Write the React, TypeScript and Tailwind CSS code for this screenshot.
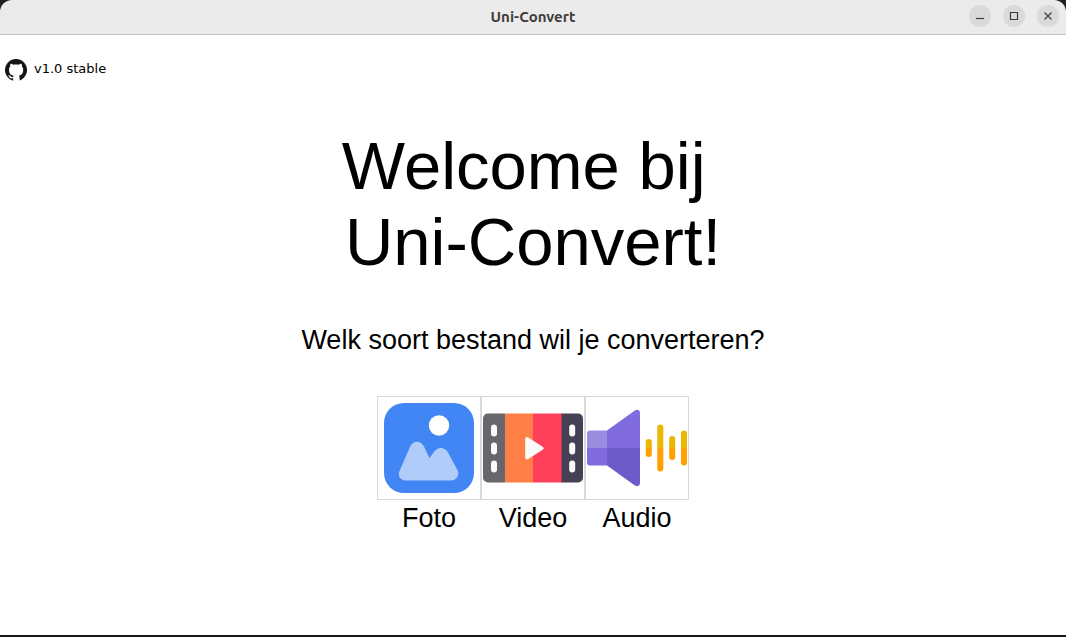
import React from 'react';

function GitHubMark() {
  return (
    <svg viewBox="0 0 22 22" className="size-[22px] shrink-0" aria-hidden="true">
      <circle cx="11" cy="11" r="11" fill="#161418" />
      <path
        d="M5.600 4.800c1 0 1.900.3 2.600.9 1.800-.4 3.800-.4 5.600 0 .7-.6 1.600-.9 2.600-.9.500.9.700 1.700.5 2.500.9 1 1.300 2.200 1.300 3.700 0 3.600-1.700 5.200-4.300 5.700.5.600.7 1.400.7 2.400V22.500H8.200v-3.200c-2.500.4-3.400-.4-4-1.500-.3-.6-.7-1-1.200-1.500.9-.4 1.800 0 2.400.8.700 1 1.500 1.300 2.800 1 .1-.5.200-1 .5-1.400-2.700-.5-4.700-2-4.700-5.700 0-1.500.4-2.700 1.300-3.700-.2-.8-.1-1.600.3-2.500z"
        fill="#fff"
      />
    </svg>
  );
}

function PhotoIcon() {
  return (
    <svg viewBox="0 0 100 100" className="size-full" aria-hidden="true">
      <rect x="5" y="5" width="90" height="90" rx="20" fill="#4286f5" />
      <circle cx="60" cy="27.500" r="10.200" fill="#fff" />
      <path d="M20.500 73 L31.200 48.500 C34 42.200 42 42.200 45 48.500 L50.500 60 L55.500 53.300 C59.500 48.200 66 49 69 54.500 L78.500 72 C81 77 77.500 82.500 72 82.500 H27 C21.500 82.500 18.300 78 20.500 73Z" fill="#b0ccfb" />
    </svg>
  );
}

function VideoIcon() {
  return (
    <svg viewBox="0 0 100 100" className="size-full" aria-hidden="true">
      <path d="M22 15.500H5a5 5 0 0 0-5 5v59a5 5 0 0 0 5 5h17z" fill="#66666b" />
      <path d="M78 15.500h17a5 5 0 0 1 5 5v59a5 5 0 0 1-5 5H78z" fill="#464055" />
      <path d="M22 15.500h28v69H22z" fill="#ff7f47" />
      <path d="M50 15.500h28.500v69H50z" fill="#ff405b" />
      <g fill="#fafafa">
        <rect x="8" y="26.500" width="6" height="12" rx="3" />
        <rect x="8" y="44.500" width="6" height="12" rx="3" />
        <rect x="8" y="62.500" width="6" height="12" rx="3" />
        <rect x="86.200" y="26.500" width="6" height="12" rx="3" />
        <rect x="86.200" y="44.500" width="6" height="12" rx="3" />
        <rect x="86.200" y="62.500" width="6" height="12" rx="3" />
      </g>
      <path d="M42.200 41v18.500c0 1.700 1.500 2.500 3 1.600l14.500-9.300c1.300-.8 1.300-2.300 0-3.100l-14.500-9.300c-1.500-.9-3-.1-3 1.600z" fill="#fafafa" />
    </svg>
  );
}

function AudioIcon() {
  return (
    <svg viewBox="0 0 100 100" className="size-full" aria-hidden="true">
      <path d="M3 32.500h17V50H0V35.500a3 3 0 0 1 3-3z" fill="#988de0" />
      <path d="M0 50h20v17.500H3a3 3 0 0 1-3-3z" fill="#806bdf" />
      <path d="M20 32.500 47.500 12.700C50 11 53 12 53 15v35H20z" fill="#806bdf" />
      <path d="M20 50h33v35c0 3-3 4-5.500 2.300L20 67.500z" fill="#6d5bca" />
      <g fill="#ecb700">
        <path d="M58.800 50v-6a3 3 0 0 1 6 0v6z" />
        <path d="M70.300 50V29.500a3 3 0 0 1 6 0V50z" />
        <path d="M82.200 50v-9a3 3 0 0 1 6 0v9z" />
        <path d="M94 50V35.500a3 3 0 0 1 6 0V50z" />
      </g>
      <g fill="#ff9f00">
        <path d="M58.800 50v6a3 3 0 0 0 6 0v-6z" />
        <path d="M70.300 50v20.500a3 3 0 0 0 6 0V50z" />
        <path d="M82.200 50v9a3 3 0 0 0 6 0v-9z" />
        <path d="M94 50v14.500a3 3 0 0 0 6 0V50z" />
      </g>
    </svg>
  );
}

const windowControls = [
  { label: 'Minimize', shape: 'M7 13.500h8' },
  { label: 'Maximize', shape: 'M7.500 7.500h7v7h-7z' },
  { label: 'Close', shape: 'M7.500 7.500l7 7M14.500 7.500l-7 7' },
];

function TitleBar() {
  return (
    <header className="grid h-[35px] grid-cols-[1fr_auto_1fr] items-center rounded-t-xl border-b border-[#bfbfbf] bg-[#ebebeb] px-[7px]">
      <span />
      <span className="font-['Ubuntu','Noto_Sans',sans-serif] text-[15px] leading-5 font-bold text-[#3d3d3d]">Uni-Convert</span>
      <div className="flex justify-end gap-3 pb-0.5">
        {windowControls.map(({ label, shape }) => (
          <button key={label} type="button" aria-label={label} className="size-[22px] rounded-full bg-[#dadada]">
            <svg viewBox="0 0 22 22" className="size-full" fill="none" stroke="#3d3d3d" strokeWidth="1.200">
              <path d={shape} />
            </svg>
          </button>
        ))}
      </div>
    </header>
  );
}

const fileTypes = [
  { id: 'foto', label: 'Foto', Icon: PhotoIcon },
  { id: 'video', label: 'Video', Icon: VideoIcon },
  { id: 'audio', label: 'Audio', Icon: AudioIcon },
];

export default function App() {
  return (
    <div className="flex min-h-screen flex-col border-b-2 border-[#16171c] bg-[#202020] font-['Liberation_Sans',Arial,sans-serif] text-black">
      <TitleBar />
      <main className="flex-1 bg-white">
        <div className="flex items-center gap-[7px] px-[5px] pt-6">
          <GitHubMark />
          <span className="pb-0.5 font-['DejaVu_Sans',sans-serif] text-[13px] leading-5">v1.0 stable</span>
        </div>
        <section className="flex flex-col items-center pt-[47px]">
          <h1 className="text-center text-[67px] leading-[76px] whitespace-pre">{'Welcome bij \nUni-Convert!'}</h1>
          <p className="mt-11 text-[27px] leading-8">Welk soort bestand wil je converteren?</p>
          <div className="mt-10 flex">
            {fileTypes.map(({ id, label, Icon }) => (
              <div key={id} className="flex w-[104px] flex-col items-center">
                <button type="button" aria-labelledby={id} className="size-[104px] border border-[#d9d9d9] bg-white p-px">
                  <Icon />
                </button>
                <span id={id} className="mt-0.5 text-[27px] leading-8">{label}</span>
              </div>
            ))}
          </div>
        </section>
      </main>
    </div>
  );
}
